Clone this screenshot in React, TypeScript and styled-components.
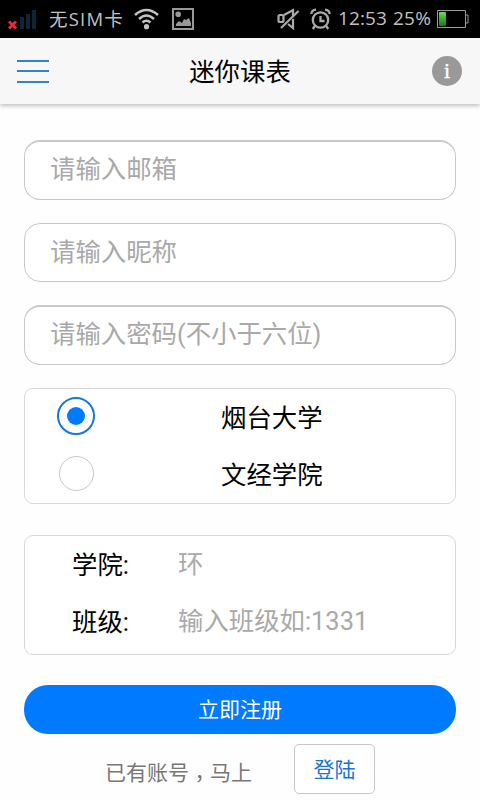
import React from "react";
import styled, { createGlobalStyle } from "styled-components";

const GlobalStyle = createGlobalStyle`
  * { box-sizing: border-box; }
  body {
    margin: 0;
    background: #fff;
    font-family: Roboto, "Noto Sans CJK SC", sans-serif;
    font-size: 25.4px;
  }
  input, button { font: inherit; }
`;

const Screen = styled.div`
  width: 480px;
  height: 800px;
  display: flex;
  flex-direction: column;
  background: #fefefe;
  overflow: hidden;
`;

const StatusBar = styled.header`
  height: 38px;
  flex: none;
  display: flex;
  align-items: center;
  background: #000;
  color: #c0c0c0;
  padding-left: 7px;
  svg { flex: none; display: block; }
`;

const StatusText = styled.span<{ $width: number; $left: number; $size: number; $gap?: number }>`
  width: ${(p) => p.$width}px;
  margin-left: ${(p) => p.$left}px;
  font-family: "Open Sans", "Noto Sans CJK SC", sans-serif;
  font-weight: 400;
  font-size: ${(p) => p.$size}px;
  letter-spacing: ${(p) => p.$gap ?? 0}px;
  line-height: 37px;
  height: 38px;
  white-space: nowrap;
`;

const Spacer = styled.div`
  flex: 1;
`;

const IconStrip = styled.div`
  width: 346px;
  flex: none;
  display: flex;
  align-items: center;
`;

const IconSlot = styled.span<{ $width: number }>`
  width: ${(p) => p.$width}px;
  flex: none;
`;

const TitleBar = styled.nav`
  height: 66px;
  flex: none;
  display: flex;
  align-items: center;
  justify-content: space-between;
  padding: 0 18px 0 17px;
  background: #f7f7f7;
  box-shadow: 0 2px 4px rgba(0, 0, 0, 0.24);
`;

const MenuButton = styled.button`
  width: 32px;
  height: 23px;
  padding: 0;
  border: 0;
  background: none;
  display: flex;
  flex-direction: column;
  justify-content: space-between;
`;

const MenuLine = styled.span`
  height: 2px;
  width: 100%;
  background: #3184c9;
`;

const Title = styled.h1`
  margin: 1px 1px 0 0;
  font-size: 25.4px;
  font-weight: 400;
  line-height: 38px;
  color: #000;
`;

const InfoButton = styled.button`
  width: 30px;
  height: 30px;
  border: 0;
  border-radius: 50%;
  padding: 0;
  background: #999;
  color: #fff;
  font: 22px/28px "Liberation Serif", serif;
  -webkit-text-stroke: 0.4px #fff;
  text-align: center;
`;

const Form = styled.main`
  padding: 36px 24px 0;
  display: flex;
  flex-direction: column;
`;

const Field = styled.input<{ $tall?: boolean }>`
  width: 432px;
  height: ${(p) => (p.$tall ? 60 : 59)}px;
  margin-bottom: 23px;
  border: 1px solid #c8c8c8;
  border-top-width: ${(p) => (p.$tall ? 2 : 1)}px;
  border-radius: 16px;
  padding: 0 25px ${(p) => (p.$tall ? 3 : 1)}px;
  background: #fff;
  outline: 0;
  &::placeholder { color: #a9a9a9; opacity: 1; }
`;

const Panel = styled.section<{ $height: number; $gap: number }>`
  height: ${(p) => p.$height}px;
  margin-bottom: ${(p) => p.$gap}px;
  border: 1px solid #d8d8d8;
  border-radius: 9px;
  background: #fff;
`;

const Option = styled.label`
  height: 57px;
  display: flex;
  align-items: center;
  padding: 0 0 3px 32px;
`;

const RadioCell = styled.span`
  width: 38px;
  height: 38px;
  display: grid;
  place-items: center;
`;

const Radio = styled.span<{ $checked?: boolean }>`
  width: ${(p) => (p.$checked ? 38 : 35)}px;
  height: ${(p) => (p.$checked ? 38 : 35)}px;
  border-radius: 50%;
  border: ${(p) => (p.$checked ? "2.5px solid #1878d5" : "1.5px solid #c8c8c8")};
  display: grid;
  place-items: center;
`;

const Dot = styled.span`
  width: 18px;
  height: 18px;
  border-radius: 50%;
  background: #007aff;
`;

const OptionText = styled.span`
  margin: -1px 0 0 126px;
  color: #000;
`;

const Row = styled.label`
  height: 57px;
  display: flex;
  align-items: center;
  padding: 0 0 1px 47px;
  color: #000;
`;

const RowLabel = styled.span`
  width: 106px;
  margin-top: -2px;
  white-space: nowrap;
`;

const RowInput = styled.input`
  width: 250px;
  height: 40px;
  padding: 0;
  border: 0;
  outline: 0;
  background: transparent;
  &::placeholder { color: #a9a9a9; opacity: 1; }
`;

const SubmitButton = styled.button`
  height: 49px;
  border: 0;
  border-radius: 24px;
  padding: 0 0 3px;
  background: #007aff;
  color: #fff;
  font-size: 21px;
`;

const Footer = styled.footer`
  display: flex;
  align-items: center;
  margin-top: 10px;
  padding-left: 81px;
  font-size: 21px;
  color: #777;
`;

const Prompt = styled.span`
  width: 189px;
  padding-top: 3px;
  white-space: nowrap;
`;

const Comma = styled.span`
  font-family: "Noto Sans CJK TC", sans-serif;
  line-height: 0;
  vertical-align: -6px;
`;

const LoginButton = styled.button`
  width: 81px;
  height: 50px;
  padding: 0 0 2px;
  border: 1px solid #c8c8c8;
  border-radius: 5px;
  background: #fff;
  color: #1677d2;
`;

const SignalIcon = () => (
  <svg width="32" height="22" viewBox="0 0 32 22">
    <path d="M13 9v12h4V9zM19 6v15h4V6zM25 2v19h4V2z" fill="#0c2638" />
    <path d="M2 13.5l7 7M9 13.5l-7 7" stroke="#e22b36" strokeWidth="3" />
  </svg>
);

const WifiIcon = () => (
  <svg width="26" height="22" viewBox="0 0 26 22" fill="none" stroke="#c2c2c2" strokeWidth="2.6">
    <path d="M1 7Q12.5-3 24 7M5 11Q12.5 4 20 11M8.5 14.5Q12.5 11 16.5 14.5" />
    <circle cx="12.5" cy="18.7" r="2.6" fill="#c2c2c2" stroke="none" />
  </svg>
);

const PictureIcon = () => (
  <svg width="22" height="22" viewBox="0 0 22 22">
    <rect x="1" y="1" width="20" height="20" fill="none" stroke="#989898" strokeWidth="2" />
    <circle cx="6.2" cy="6.2" r="2.8" fill="#989898" />
    <path d="M4 18v-2l3-3 3 2 2-4 2 1 3-2 2 5v3z" fill="#989898" />
  </svg>
);

const MuteIcon = () => (
  <svg width="23" height="22" viewBox="0 0 23 22" fill="none" stroke="#aaa" strokeWidth="2.2">
    <path d="M7 7L16 2v6M11 16l5 4v-9" />
    <rect x="1.5" y="7" width="5" height="7" rx="1.5" />
    <path d="M21.5 3L4 20" />
  </svg>
);

const AlarmIcon = () => (
  <svg width="22" height="22" viewBox="0 0 22 22" fill="none" stroke="#aaa" strokeWidth="2.3">
    <circle cx="10.5" cy="12" r="7.7" />
    <path d="M10.5 8V13h4M4.8 18l-2 3M16.2 18l2 3" />
    <path d="M1.3 6Q1.7 2 6 1.6M19.7 6Q19.3 2 15 1.6" />
  </svg>
);

const BatteryIcon = () => (
  <svg width="32" height="19" viewBox="0 0 32 19">
    <defs>
      <linearGradient id="charge" x1="0" x2="0" y1="0" y2="1">
        <stop offset="0" stopColor="#72db61" />
        <stop offset=".45" stopColor="#36b82d" />
        <stop offset="1" stopColor="#167d15" />
      </linearGradient>
    </defs>
    <path d="M.5.5h28V5h2.5v8h-2.5v4.5H.5z" fill="none" stroke="#9b9b9b" />
    <path d="M28.5 5v8" stroke="#9b9b9b" />
    <rect x="2" y="2" width="7" height="14" rx="1" fill="url(#charge)" />
  </svg>
);

function StatusIcons() {
  return (
    <IconStrip>
      <IconSlot $width={38}><WifiIcon /></IconSlot>
      <IconSlot $width={105}><PictureIcon /></IconSlot>
      <IconSlot $width={33}><MuteIcon /></IconSlot>
      <IconSlot $width={22}><AlarmIcon /></IconSlot>
      <StatusText $left={6} $width={55} $size={19} $gap={0.1}>12:53</StatusText>
      <StatusText $left={0} $width={44} $size={19} $gap={0.2}>25%</StatusText>
      <BatteryIcon />
    </IconStrip>
  );
}

export default function App() {
  return (
    <>
      <GlobalStyle />
      <Screen>
        <StatusBar>
          <SignalIcon />
          <StatusText $left={10} $width={75} $size={18.5} $gap={1.2}>无SIM卡</StatusText>
          <Spacer />
          <StatusIcons />
        </StatusBar>
        <TitleBar>
          <MenuButton aria-label="菜单"><MenuLine /><MenuLine /><MenuLine /></MenuButton>
          <Title>迷你课表</Title>
          <InfoButton>i</InfoButton>
        </TitleBar>
        <Form>
          <Field $tall placeholder="请输入邮箱" />
          <Field placeholder="请输入昵称" />
          <Field $tall placeholder="请输入密码(不小于六位)" />
          <Panel $height={116} $gap={31}>
            <Option><RadioCell><Radio $checked><Dot /></Radio></RadioCell><OptionText>烟台大学</OptionText></Option>
            <Option><RadioCell><Radio /></RadioCell><OptionText>文经学院</OptionText></Option>
          </Panel>
          <Panel $height={120} $gap={30}>
            <Row><RowLabel>学院:</RowLabel><RowInput placeholder="环" /></Row>
            <Row><RowLabel>班级:</RowLabel><RowInput placeholder="输入班级如:1331" /></Row>
          </Panel>
          <SubmitButton>立即注册</SubmitButton>
          <Footer>
            <Prompt>已有账号<Comma lang="zh-TW">，</Comma>马上</Prompt>
            <LoginButton>登陆</LoginButton>
          </Footer>
        </Form>
      </Screen>
    </>
  );
}
